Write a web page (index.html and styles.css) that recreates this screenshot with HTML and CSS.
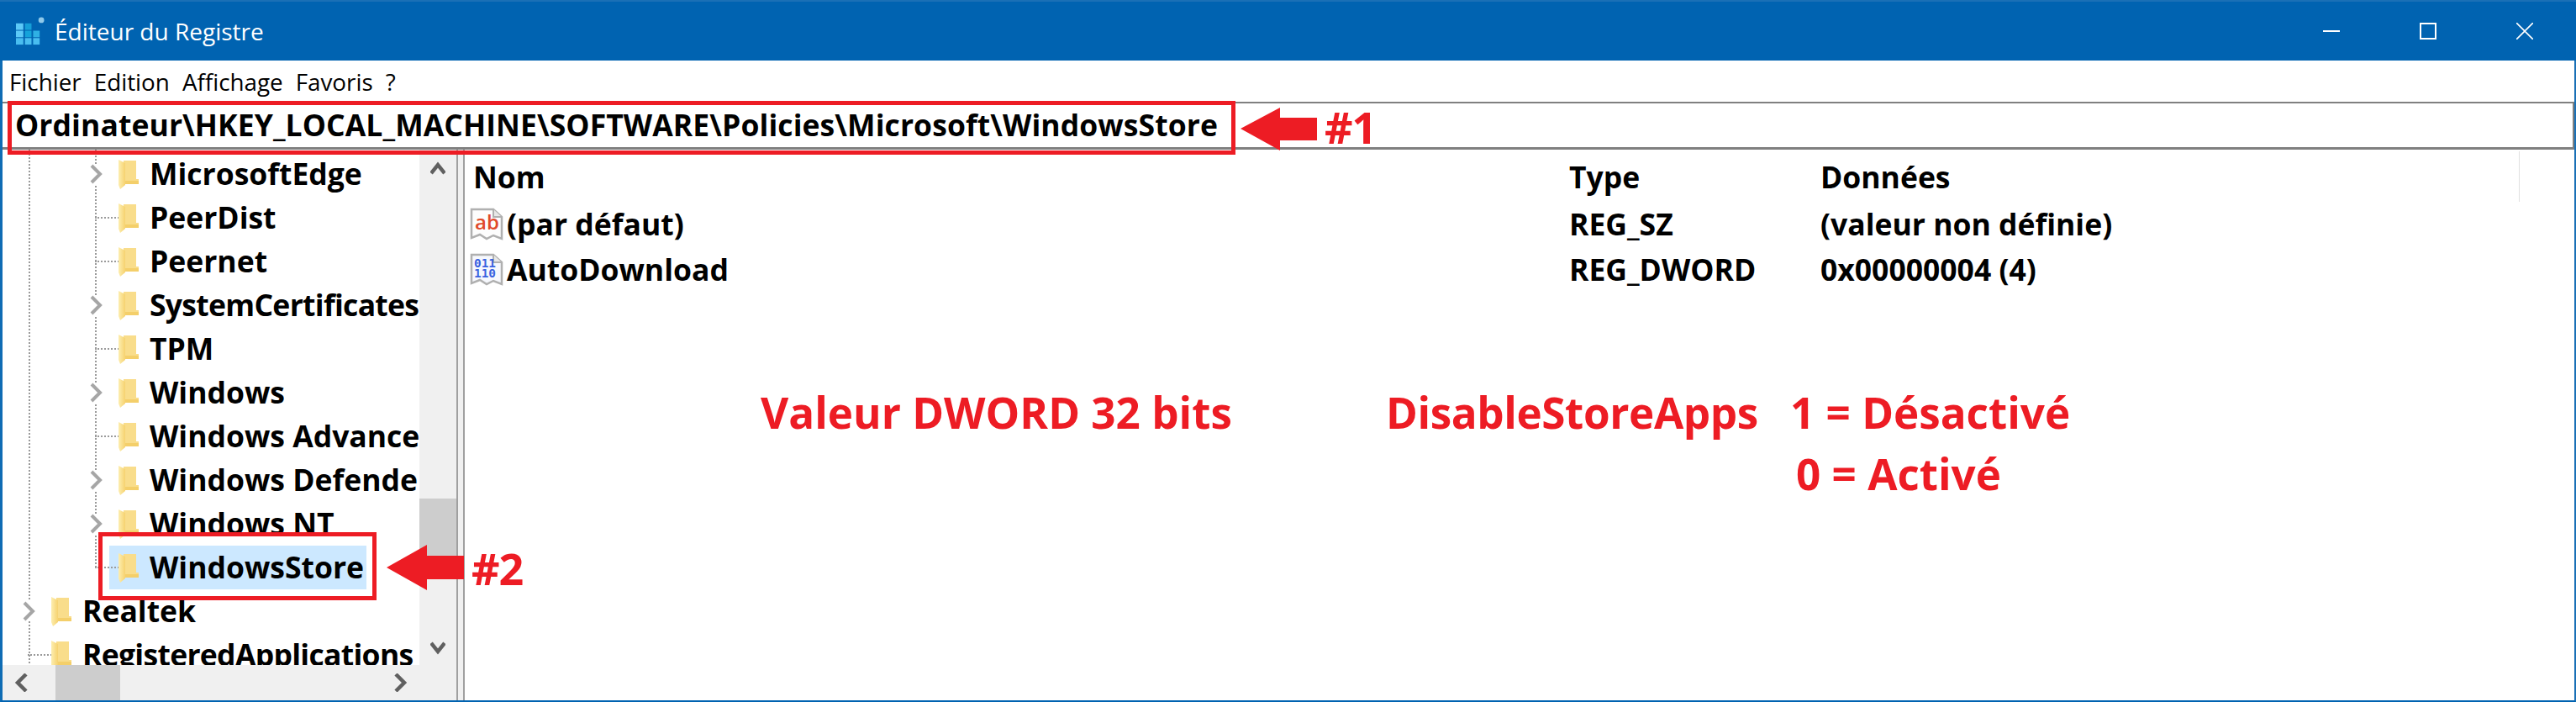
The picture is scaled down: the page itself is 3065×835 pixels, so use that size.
FILE: index.html
```html
<!DOCTYPE html>
<html lang="fr">
<head>
<meta charset="utf-8">
<title>Éditeur du Registre</title>
<link rel="stylesheet" href="styles.css">
</head>
<body>
<svg class="defs" width="0" height="0" aria-hidden="true">
  <defs>
    <linearGradient id="fg" x1="0" y1="0" x2="1" y2="0">
      <stop offset="0" stop-color="#fdeeb0"/><stop offset="1" stop-color="#f6d26f"/>
    </linearGradient>
    <symbol id="folder" viewBox="0 0 25 35">
      <path d="M7 1H22V23H25V28H7Z" fill="#f9dd8b"/>
      <path d="M1 0 9 4V30L3 35 1 30Z" fill="url(#fg)"/>
      <path d="M9 25H25V29H9Z" fill="#f4cf6a"/>
    </symbol>
    <symbol id="chev" viewBox="0 0 15 24">
      <path d="M2 2 12 12 2 22" fill="none" stroke="#a6a6a6" stroke-width="4"/>
    </symbol>
  </defs>
</svg>
<div class="window">
  <header class="titlebar">
    <svg class="appicon" viewBox="0 0 36 36">
      <g fill="#49bdf0">
        <rect x="0" y="8" width="9" height="8" fill="#5cc9f7"/><rect x="11" y="8" width="8" height="8" fill="#159fd8"/>
        <rect x="0" y="17" width="9" height="8" fill="#5cc9f7"/><rect x="11" y="17" width="8" height="8" fill="#14a3da"/><rect x="21" y="17" width="8" height="8" fill="#2fb0e4"/>
        <rect x="0" y="26" width="9" height="8"/><rect x="11" y="26" width="8" height="8"/><rect x="21" y="26" width="8" height="8"/>
      </g>
      <circle cx="31" cy="4" r="3.5" fill="#8fc9ea"/>
    </svg>
    <h1 class="title">Éditeur du Registre</h1>
    <div class="controls">
      <svg class="ctl" viewBox="0 0 20 20"><path d="M0 10H20" stroke="#fff" stroke-width="2"/></svg>
      <svg class="ctl" viewBox="0 0 20 20"><rect x="1" y="1" width="18" height="18" fill="none" stroke="#fff" stroke-width="2"/></svg>
      <svg class="ctl" viewBox="0 0 20 20"><path d="M0 0 20 20M20 0 0 20" stroke="#fff" stroke-width="1.6"/></svg>
    </div>
  </header>
  <nav class="menu"><span>Fichier</span><span>Edition</span><span>Affichage</span><span>Favoris</span><span>?</span></nav>
  <div class="address">Ordinateur\HKEY_LOCAL_MACHINE\SOFTWARE\Policies\Microsoft\WindowsStore</div>
  <main class="panes">
    <section class="treepane">
      <div class="treeview">
        <div class="guide g1"></div>
        <div class="guide g2"></div>
        <ul class="tree">
          <li class="node d2"><svg class="chev"><use href="#chev"/></svg><svg class="folder"><use href="#folder"/></svg><span>MicrosoftEdge</span></li>
          <li class="node d2"><i class="tick"></i><svg class="folder"><use href="#folder"/></svg><span>PeerDist</span></li>
          <li class="node d2"><i class="tick"></i><svg class="folder"><use href="#folder"/></svg><span>Peernet</span></li>
          <li class="node d2 tight"><svg class="chev"><use href="#chev"/></svg><svg class="folder"><use href="#folder"/></svg><span>SystemCertificates</span></li>
          <li class="node d2"><i class="tick"></i><svg class="folder"><use href="#folder"/></svg><span>TPM</span></li>
          <li class="node d2"><svg class="chev"><use href="#chev"/></svg><svg class="folder"><use href="#folder"/></svg><span>Windows</span></li>
          <li class="node d2"><i class="tick"></i><svg class="folder"><use href="#folder"/></svg><span>Windows Advanced Threat Protection</span></li>
          <li class="node d2"><svg class="chev"><use href="#chev"/></svg><svg class="folder"><use href="#folder"/></svg><span>Windows Defender</span></li>
          <li class="node d2"><svg class="chev"><use href="#chev"/></svg><svg class="folder"><use href="#folder"/></svg><span>Windows NT</span></li>
          <li class="node d2 sel"><i class="tick"></i><svg class="folder"><use href="#folder"/></svg><span>WindowsStore</span></li>
          <li class="node d1"><svg class="chev"><use href="#chev"/></svg><svg class="folder"><use href="#folder"/></svg><span>Realtek</span></li>
          <li class="node d1 tight"><i class="tick"></i><svg class="folder"><use href="#folder"/></svg><span>RegisteredApplications</span></li>
        </ul>
      </div>
      <div class="vscroll">
        <svg class="sb-arrow" viewBox="0 0 18 16"><path d="M1 14 9 4 17 14" fill="none" stroke="#606060" stroke-width="4.5"/></svg>
        <div class="vtrack"><div class="vthumb"></div></div>
        <svg class="sb-arrow" viewBox="0 0 18 16"><path d="M1 2 9 12 17 2" fill="none" stroke="#606060" stroke-width="4.5"/></svg>
      </div>
      <div class="hscroll">
        <svg class="sb-h" viewBox="0 0 16 22"><path d="M14 1 4 11 14 21" fill="none" stroke="#606060" stroke-width="4.5"/></svg>
        <div class="hthumb"></div>
        <svg class="sb-h sb-right" viewBox="0 0 16 22"><path d="M2 1 12 11 2 21" fill="none" stroke="#606060" stroke-width="4.5"/></svg>
      </div>
    </section>
    <div class="splitter"></div>
    <section class="list">
      <div class="row head"><span class="c-name">Nom</span><span class="c-type">Type</span><span class="c-data">Données</span><i class="colsep"></i></div>
      <div class="row">
        <span class="c-name"><svg class="regicon" viewBox="0 0 40 40"><path d="M2 2H28L38 11V37L28 33 20 37 12 32 2 36Z" fill="#fdfdfd" stroke="#b0b0b0" stroke-width="2.5"/><path d="M28 2V11H38" fill="#e8e8e8" stroke="#b0b0b0" stroke-width="2"/><text x="6" y="26" class="ab">ab</text></svg>(par défaut)</span>
        <span class="c-type">REG_SZ</span><span class="c-data">(valeur non définie)</span>
      </div>
      <div class="row">
        <span class="c-name"><svg class="regicon" viewBox="0 0 40 40"><path d="M2 2H28L38 11V37L28 33 20 37 12 32 2 36Z" fill="#f6f8fd" stroke="#b0b0b0" stroke-width="2.5"/><path d="M28 2V11H38" fill="#e8e8e8" stroke="#b0b0b0" stroke-width="2"/><text x="5" y="17" class="bin">011</text><text x="5" y="29" class="bin">110</text></svg>AutoDownload</span>
        <span class="c-type">REG_DWORD</span><span class="c-data">0x00000004 (4)</span>
      </div>
    </section>
  </main>
</div>

<div class="redbox box1"></div>
<div class="redbox box2"></div>
<svg class="arrow a1" viewBox="0 0 92 52"><path d="M0 25 47 0V12H91V39H47V51Z" fill="#ed1c24"/></svg>
<svg class="arrow a2" viewBox="0 0 92 55"><path d="M0 27 48 0V13H92V41H48V54Z" fill="#ed1c24"/></svg>
<span class="note n1">#1</span>
<span class="note n2">#2</span>
<span class="note t1">Valeur DWORD 32 bits</span>
<span class="note t2">DisableStoreApps</span>
<span class="note t3">1 = Désactivé</span>
<span class="note t4">0 = Activé</span>
</body>
</html>
```
FILE: styles.css
```css
* { box-sizing: border-box; }
html, body { margin: 0; padding: 0; }
body {
  position: relative;
  width: 3065px;
  height: 835px;
  overflow: hidden;
  background: #fff;
  font-family: "Open Sans", "Noto Sans", sans-serif;
  color: #000;
}
.defs { position: absolute; }
.window {
  display: flex;
  flex-direction: column;
  height: 835px;
  border-left: 3px solid #0f6cb4;
  border-right: 2px solid #1a70b6;
  border-bottom: 2px solid #0063b1;
  background: #fff;
}
.titlebar {
  display: flex;
  align-items: center;
  height: 72px;
  flex: none;
  margin-left: -3px;
  margin-right: -2px;
  padding-left: 19px;
  background: #0063b1;
  border-top: 2px solid #1a70b6;
  color: #fff;
}
.appicon { width: 35px; height: 35px; flex: none; margin-top: 1px; }
.title {
  margin: 0 0 0 11px;
  font-size: 28px;
  font-weight: 400;
  line-height: 40px;
}
.controls { display: flex; margin-left: auto; margin-right: 51px; gap: 95px; }
.ctl { width: 20px; height: 20px; display: block; }
.menu {
  display: flex;
  gap: 15px;
  align-items: center;
  height: 49px;
  flex: none;
  padding-left: 8px;
  font-size: 27.8px;
}
.address {
  height: 57px;
  flex: none;
  border: 2px solid #808080;
  border-left: 0;
  border-bottom-width: 3px;
  padding-left: 15px;
  font-size: 35.5px;
  font-weight: 700;
  line-height: 50px;
  letter-spacing: 0.08px;
  white-space: nowrap;
}
.panes { display: flex; flex: 1; min-height: 0; }
.treepane {
  position: relative;
  width: 540px;
  flex: none;
  display: grid;
  grid-template-columns: 496px 44px;
  grid-template-rows: 1fr 42px;
  overflow: hidden;
}
.treeview { position: relative; overflow: hidden; }
.guide { position: absolute; width: 0; border-left: 2px dotted #9a9a9a; }
.g1 { left: 31px; top: 0; height: 611px; }
.g2 { left: 110px; top: 0; height: 497px; }
.tree { list-style: none; margin: 0; padding: 3px 0 0; position: relative; }
.node {
  display: flex;
  align-items: center;
  height: 52px;
  font-size: 35.5px;
  font-weight: 700;
  white-space: nowrap;
}
.tight { letter-spacing: -0.7px; }
.node span { margin-left: 13px; padding-bottom: 2px; }
.d2 { padding-left: 104px; }
.d1 { padding-left: 24px; }
.chev { width: 15px; height: 24px; flex: none; margin-right: 18px; background: #fff; }
.tick { display: block; width: 33px; height: 0; flex: none; margin-left: 6px; margin-right: -6px; border-top: 2px dotted #9a9a9a; }
.folder { width: 25px; height: 35px; flex: none; }
.sel { position: relative; }
.sel::before {
  content: "";
  position: absolute;
  left: 127px;
  top: 0;
  width: 306px;
  height: 52px;
  background: #cce8ff;
}
.sel > * { position: relative; }
.vscroll {
  display: flex;
  flex-direction: column;
  align-items: center;
  background: #f0f0f0;
  padding: 14px 0 12px;
}
.sb-arrow { width: 18px; height: 16px; flex: none; }
.vtrack { flex: 1; width: 100%; position: relative; }
.vthumb { position: absolute; left: 0; right: 0; top: 385px; height: 73px; background: #cdcdcd; }
.hscroll {
  grid-column: 1 / 3;
  display: flex;
  align-items: center;
  background: #f0f0f0;
  padding-left: 14px;
}
.sb-h { width: 16px; height: 22px; flex: none; }
.hthumb { width: 77px; height: 42px; margin-left: 33px; background: #cdcdcd; }
.sb-right { margin-left: 326px; }
.splitter {
  width: 10px;
  flex: none;
  border-left: 2px solid #a0a0a0;
  border-right: 2px solid #a0a0a0;
  background: #f0f0f0;
}
.list { flex: 1; min-width: 0; position: relative; }
.row {
  display: flex;
  align-items: center;
  height: 54px;
  padding-bottom: 2px;
  font-size: 35.5px;
  font-weight: 700;
  white-space: nowrap;
}
.head { height: 62px; padding-top: 2px; padding-bottom: 0; }
.row .c-name { display: flex; align-items: center; width: 1314px; padding-left: 6px; flex: none; }
.head .c-name { padding-left: 10px; }
.c-type { width: 299px; flex: none; }
.regicon { width: 40px; height: 40px; flex: none; margin: 2px 4px 0 0; }
.ab { font: 600 24px "Open Sans", sans-serif; fill: #e04a2a; letter-spacing: 0; }
.bin { font: 700 14.4px "DejaVu Sans Mono", monospace; fill: #3a62e0; letter-spacing: 0; }
.colsep { position: absolute; left: 2444px; top: 2px; width: 1px; height: 60px; background: #e0e0e0; }

.redbox { position: absolute; border: 5px solid #ed1c24; }
.box1 { left: 9px; top: 120px; width: 1461px; height: 64px; }
.box2 { left: 117px; top: 633px; width: 331px; height: 81px; }
.arrow { position: absolute; }
.a1 { left: 1476px; top: 128px; width: 92px; height: 52px; }
.a2 { left: 460px; top: 648px; width: 92px; height: 55px; }
.note {
  position: absolute;
  color: #ed1c24;
  font-weight: 700;
  white-space: nowrap;
  line-height: 1;
}
.n1 { left: 1576px; top: 125px; font-size: 52px; letter-spacing: -1px; }
.n2 { left: 561px; top: 650px; font-size: 52px; letter-spacing: -1px; }
.t1 { left: 905px; top: 465px; font-size: 51.2px; }
.t2 { left: 1649px; top: 465px; font-size: 51.2px; letter-spacing: -0.4px; }
.t3 { left: 2130px; top: 465px; font-size: 51.2px; }
.t4 { left: 2137px; top: 538px; font-size: 51.2px; }
```
